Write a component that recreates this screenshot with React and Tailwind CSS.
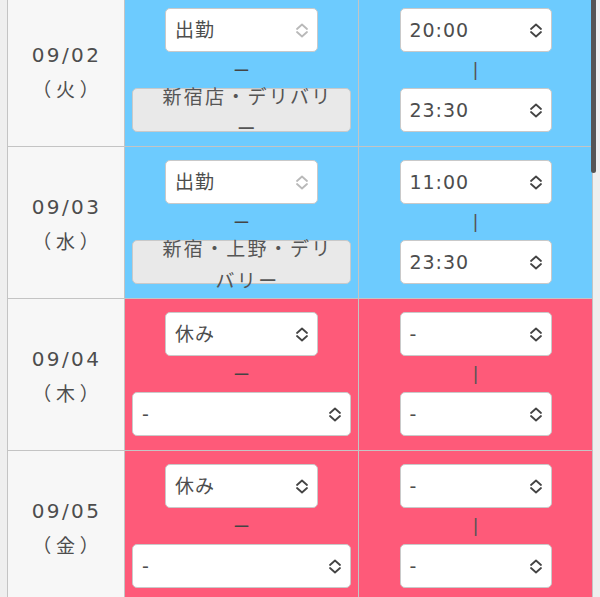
import React from 'react';

const rows = [
  { date: '09/02', day: '（火）', work: true, status: '出勤', place: '新宿店・デリバリー', start: '20:00', end: '23:30' },
  { date: '09/03', day: '（水）', work: true, status: '出勤', place: '新宿・上野・デリバリー', start: '11:00', end: '23:30' },
  { date: '09/04', day: '（木）', work: false, status: '休み', place: '-', start: '-', end: '-' },
  { date: '09/05', day: '（金）', work: false, status: '休み', place: '-', start: '-', end: '-' },
];

const Arrows = ({ light }) => (
  <svg width="14" height="15" viewBox="0 0 14 15" fill="none" stroke={light ? '#b9b9b9' : '#444'} strokeWidth="1.8" strokeLinecap="round" strokeLinejoin="round">
    <polyline points="2,6 7,1.5 12,6" />
    <polyline points="2,9 7,13.5 12,9" />
  </svg>
);

const Select = ({ value, light, className = '' }) => (
  <div className={`h-[44px] bg-white border border-[#c9c9c9] rounded-[5px] flex items-center justify-between pl-[9px] pr-[8px] ${className}`}>
    <span className="text-[19px] tracking-[0.05em] text-[#4d4d4d]">{value}</span>
    <Arrows light={light} />
  </div>
);

const Row = ({ r }) => {
  const bg = r.work ? 'bg-[#6dcbfe]' : 'bg-[#fe5a79]';
  return (
    <div className="flex h-[152px] border-b border-[#c4c4c4]">
      <div className="w-[117px] bg-[#f7f7f7] border-r border-[#c4c4c4] flex flex-col items-center justify-center pt-[2px] text-[#4d4d4d]">
        <div className="text-[20px] leading-[33px] tracking-[0.12em] pl-[1px]">{r.date}</div>
        <div className="text-[19px] leading-[33px] tracking-[0.25em] pl-[4px] font-['Noto_Sans_CJK_JP',sans-serif]">{r.day}</div>
      </div>
      <div className={`w-[234px] ${bg} border-r border-[#c4c4c4] pt-[13px]`}>
        <Select value={r.status} light={r.work} className="w-[153px] mx-auto" />
        <div className="h-[36px] flex items-center justify-center pt-[2px] text-[17px] text-[#444] leading-none">ー</div>
        {r.work ? (
          <div className="h-[44px] mx-[7px] bg-[#e9e9e9] border border-[#c9c9c9] rounded-[5px] flex items-center justify-center pl-[22px] pr-[10px] pt-[6px] overflow-visible">
            <div className="text-center text-[19px] leading-[32px] tracking-[0.12em] text-[#555]">{r.place}</div>
          </div>
        ) : (
          <Select value={r.place} className="mx-[7px]" />
        )}
      </div>
      <div className={`flex-1 ${bg} pt-[13px]`}>
        <Select value={r.start} className="w-[152px] mx-auto" />
        <div className="h-[36px] flex items-center justify-center text-[18px] text-[#555] leading-none pb-[1px]">|</div>
        <Select value={r.end} className="w-[152px] mx-auto" />
      </div>
    </div>
  );
};

export default function App() {
  return (
    <div className="relative h-[597px] overflow-hidden bg-[#efefef] font-['DejaVu_Sans','Noto_Sans_CJK_JP',sans-serif]">
      <div className="mx-[7px] -mt-[5px] border-l border-r border-[#c4c4c4]">
        {rows.map((r) => (
          <Row key={r.date} r={r} />
        ))}
      </div>
      <div className="absolute top-0 left-[591px] w-[5px] h-[173px] rounded-b-[3px] bg-[#555]" />
    </div>
  );
}
